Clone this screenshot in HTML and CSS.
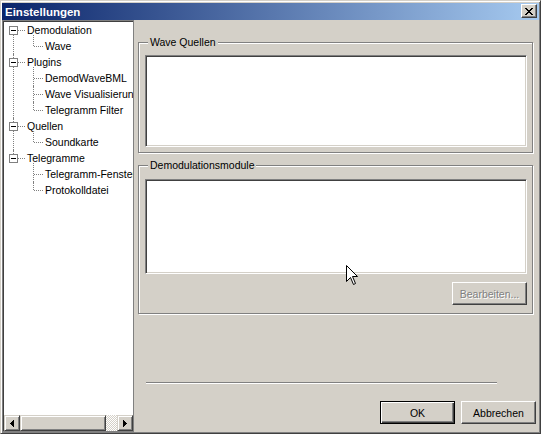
FILE: index.html
```html
<!DOCTYPE html>
<html lang="de">
<head>
  <meta charset="UTF-8" />
  <title>Einstellungen</title>
  <link rel="stylesheet" href="styles.css">
</head>
<body>
  <div class="window">
    <div class="titlebar">
      <span class="title">Einstellungen</span>
      <button class="close" aria-label="Schließen">
        <svg width="8" height="7" viewBox="0 0 8 7" shape-rendering="crispEdges">
          <path d="M0 0h2v1H0z M6 0h2v1H6z M1 1h2v1H1z M5 1h2v1H5z M2 2h4v1H2z M3 3h2v1H3z M2 4h4v1H2z M1 5h2v1H1z M5 5h2v1H5z M0 6h2v1H0z M6 6h2v1H6z" fill="#000"/>
        </svg>
      </button>
    </div>

    <div class="client">
      <div class="tree-panel">
        <ul class="tree">
          <li>
            <div class="row"><span class="expander"></span><span class="dash"></span><span class="label">Demodulation</span></div>
            <ul class="children">
              <li><div class="row"><span class="dash"></span><span class="label">Wave</span></div></li>
            </ul>
          </li>
          <li>
            <div class="row"><span class="expander"></span><span class="dash"></span><span class="label">Plugins</span></div>
            <ul class="children">
              <li><div class="row"><span class="dash"></span><span class="label">DemodWaveBML</span></div></li>
              <li><div class="row"><span class="dash"></span><span class="label">Wave Visualisierung</span></div></li>
              <li><div class="row"><span class="dash"></span><span class="label">Telegramm Filter</span></div></li>
            </ul>
          </li>
          <li>
            <div class="row"><span class="expander"></span><span class="dash"></span><span class="label">Quellen</span></div>
            <ul class="children">
              <li><div class="row"><span class="dash"></span><span class="label">Soundkarte</span></div></li>
            </ul>
          </li>
          <li>
            <div class="row"><span class="expander"></span><span class="dash"></span><span class="label">Telegramme</span></div>
            <ul class="children">
              <li><div class="row"><span class="dash"></span><span class="label">Telegramm-Fenster</span></div></li>
              <li><div class="row"><span class="dash"></span><span class="label">Protokolldatei</span></div></li>
            </ul>
          </li>
        </ul>

        <div class="hscroll">
          <span class="sb-btn">
            <svg width="4" height="7" viewBox="0 0 4 7" shape-rendering="crispEdges"><path d="M3 0h1v7H3z M2 1h1v5H2z M1 2h1v3H1z M0 3h1v1H0z" fill="#000"/></svg>
          </span>
          <span class="sb-thumb"></span>
          <span class="sb-track"></span>
          <span class="sb-btn">
            <svg width="4" height="7" viewBox="0 0 4 7" shape-rendering="crispEdges"><path d="M0 0h1v7H0z M1 1h1v5H1z M2 2h1v3H2z M3 3h1v1H3z" fill="#000"/></svg>
          </span>
        </div>
      </div>

      <div class="pane">
        <fieldset class="group">
          <legend>Wave Quellen</legend>
          <div class="listbox lb-sources"></div>
        </fieldset>

        <fieldset class="group group-modules">
          <legend>Demodulationsmodule</legend>
          <div class="listbox lb-modules"></div>
          <div class="group-actions">
            <button class="btn" disabled>Bearbeiten...</button>
          </div>
        </fieldset>

        <div class="separator"></div>

        <div class="dialog-buttons">
          <button class="btn default">OK</button>
          <button class="btn">Abbrechen</button>
        </div>
      </div>
    </div>

    <!-- mouse pointer resting over the module list -->
    <svg class="cursor" width="12" height="20" viewBox="0 0 12 20">
      <path d="M0.5 0.5 V16.5 L4.5 12.5 L7.5 19.5 L9.5 18.5 L6.5 11.5 H11.5 Z" fill="#fff" stroke="#000" stroke-width="1"/>
    </svg>
  </div>
</body>
</html>
```

FILE: styles.css
```css
html, body {
  margin: 0;
  padding: 0;
  background: #d4d0c8;
}

body {
  font-family: "Liberation Sans", Arial, sans-serif;
  font-size: 10.5px;
  color: #000;
}

ul {
  list-style: none;
  margin: 0;
  padding: 0;
}

/* dialog frame */
.window {
  position: relative;
  box-sizing: border-box;
  width: 541px;
  height: 434px;
  display: flex;
  flex-direction: column;
  padding: 1px;
  border: 1px solid;
  border-color: #d4d0c8 #404040 #404040 #d4d0c8;
  box-shadow: inset 1px 1px #fff, inset -1px -1px #808080;
  background: #d4d0c8;
  overflow: hidden;
}

.titlebar {
  flex: none;
  display: flex;
  align-items: flex-start;
  height: 17px;
  margin-top: 1px;
  padding: 0 2px 0 2px;
  background: linear-gradient(90deg, #0a246a, #a6caf0);
}

.title {
  margin-top: 1px;
  padding-left: 1px;
  font-size: 11.5px;
  font-weight: bold;
  line-height: 17px;
  color: #fff;
}

.close {
  box-sizing: border-box;
  width: 16px;
  height: 14px;
  margin: 1px 0 0 auto;
  padding: 3px 0 0 3px;
  display: flex;
  align-items: flex-start;
  background: #d4d0c8;
  border: 1px solid;
  border-color: #fff #404040 #404040 #fff;
  box-shadow: inset -1px -1px #808080;
}

.close svg {
  display: block;
}

.client {
  flex: 1;
  min-height: 0;
  display: flex;
}

/* left navigation tree */
.tree-panel {
  flex: none;
  box-sizing: border-box;
  width: 132px;
  display: flex;
  flex-direction: column;
  padding: 1px 0 0 1px;
  border: 1px solid #808080;
  box-shadow: inset 1px 1px #404040;
  background: #fff;
  overflow: hidden;
}

.tree {
  flex: 1;
  min-height: 0;
  white-space: nowrap;
  overflow: hidden;
}

.tree li {
  position: relative;
}

.tree > li::before,
.children > li::before {
  content: "";
  position: absolute;
  top: 0;
  bottom: 0;
  border-left: 1px dotted #808080;
}

.tree > li::before {
  left: 9px;
}

.tree > li:first-child::before {
  top: 8px;
}

.tree > li:last-child::before {
  bottom: auto;
  height: 8px;
}

.children > li::before {
  left: 29px;
}

.children > li:first-child::before {
  top: -3px;
}

.children > li:last-child::before {
  bottom: 8px;
}

.row {
  display: flex;
  align-items: flex-start;
  height: 16px;
}

.children .row {
  padding-left: 30px;
}

.expander {
  position: relative;
  flex: none;
  box-sizing: border-box;
  width: 9px;
  height: 9px;
  margin: 4px 0 0 5px;
  border: 1px solid #808080;
  background: #fff;
}

.expander::after {
  content: "";
  position: absolute;
  left: 1px;
  top: 3px;
  width: 5px;
  height: 1px;
  background: #000;
}

.dash {
  flex: none;
  width: 7px;
  height: 0;
  margin-top: 8px;
  border-top: 1px dotted #808080;
}

.children .dash {
  width: 9px;
}

.label {
  padding: 0 2px;
  line-height: 16px;
}

/* horizontal scrollbar under the tree */
.hscroll {
  flex: none;
  display: flex;
  height: 16px;
}

.sb-btn,
.sb-thumb {
  box-sizing: border-box;
  background: #d4d0c8;
  border: 1px solid;
  border-color: #d4d0c8 #404040 #404040 #d4d0c8;
  box-shadow: inset 1px 1px #fff, inset -1px -1px #808080;
}

.sb-btn {
  flex: none;
  width: 16px;
  display: flex;
  align-items: center;
  justify-content: center;
}

.sb-btn svg {
  display: block;
}

.sb-thumb {
  flex: none;
  width: 86px;
}

.sb-track {
  flex: 1;
  background: conic-gradient(#fff 25%, #d4d0c8 0 50%, #fff 0 75%, #d4d0c8 0) 0 0 / 2px 2px;
}

/* settings page */
.pane {
  flex: 1;
  display: flex;
  flex-direction: column;
  padding: 16px 3px 0 4px;
}

.group {
  min-width: 0;
  margin: 0 3px 0 0;
  padding: 0 5px 5px 6px;
  border: 1px solid #808080;
  box-shadow: 1px 1px #fff, inset 1px 1px #fff;
}

.group legend {
  margin-left: 3px;
  padding: 0 2px;
  line-height: 13px;
  background: #d4d0c8;
}

.group-modules {
  margin-top: 6px;
  padding-bottom: 8px;
}

.listbox {
  box-sizing: border-box;
  background: #fff;
  border: 1px solid;
  border-color: #808080 #fff #fff #808080;
  box-shadow: inset 1px 1px #404040, inset -1px -1px #d4d0c8;
}

.lb-sources {
  margin-top: 6px;
  height: 92px;
}

.lb-modules {
  margin-top: 7px;
  height: 95px;
}

.group-actions {
  display: flex;
  justify-content: flex-end;
  margin-top: 8px;
}

.separator {
  width: 351px;
  height: 0;
  margin: 68px 0 0 8px;
  border-top: 1px solid #808080;
  border-bottom: 1px solid #fff;
}

.dialog-buttons {
  display: flex;
  justify-content: flex-end;
  gap: 6px;
  margin-top: 17px;
}

.btn {
  box-sizing: border-box;
  width: 75px;
  height: 23px;
  padding: 0;
  font: inherit;
  color: #000;
  background: #d4d0c8;
  border: 1px solid;
  border-color: #fff #404040 #404040 #fff;
  box-shadow: inset -1px -1px #808080;
}

.btn.default {
  border-color: #000;
  box-shadow: inset 1px 1px #fff, inset -1px -1px #404040, inset -2px -2px #808080;
}

.btn:disabled {
  color: #808080;
  text-shadow: 1px 1px #fff;
}

.cursor {
  position: absolute;
  left: 345px;
  top: 264px;
}
```
